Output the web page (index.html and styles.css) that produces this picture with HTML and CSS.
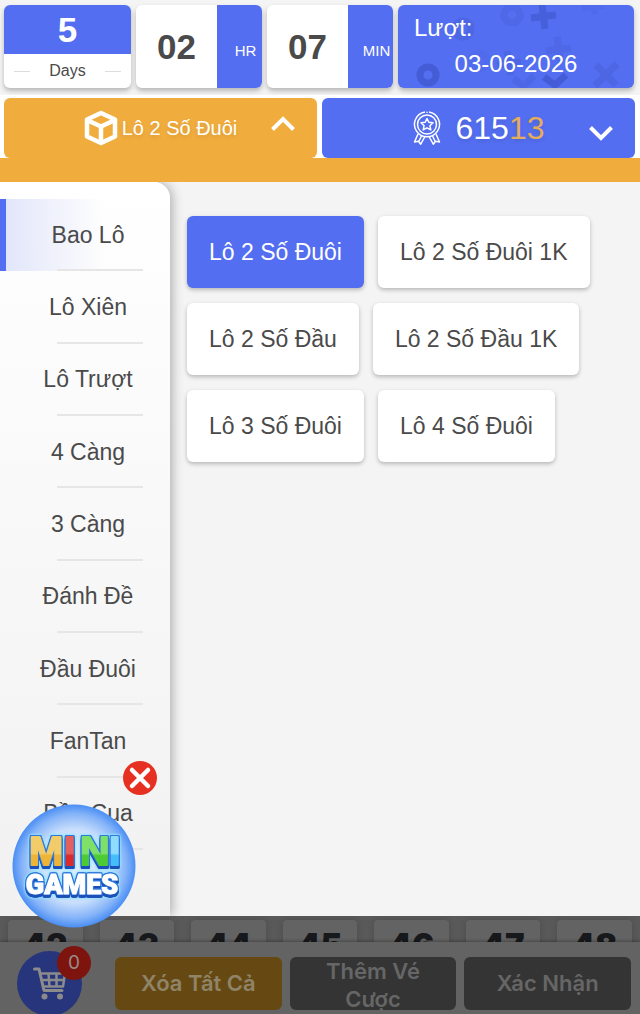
FILE: index.html
```html
<!DOCTYPE html>
<html lang="vi">
<head>
    <meta charset="UTF-8">
    <meta name="viewport" content="width=device-width, initial-scale=1.0">
    <title>Lô 2 Số Đuôi</title>
    <link rel="stylesheet" href="styles.css">
</head>
<body>
    <header class="summary">
        <div class="card days">
            <strong class="days-value">5</strong>
            <span class="days-label">Days</span>
        </div>
        <div class="card timer">
            <strong class="timer-value">02</strong>
            <span class="timer-unit">HR</span>
        </div>
        <div class="card timer">
            <strong class="timer-value">07</strong>
            <span class="timer-unit">MIN</span>
        </div>
        <div class="card draw">
            <svg class="draw-pattern" viewBox="0 0 236 83" preserveAspectRatio="xMaxYMid slice" fill="none" stroke="#3f58cf" stroke-width="7" aria-hidden="true">
                <circle cx="30" cy="70" r="8" opacity=".75"/>
                <circle cx="65" cy="24" r="8" opacity=".35"/>
                <circle cx="114" cy="10" r="8" opacity=".25"/>
                <circle cx="81" cy="56" r="8" opacity=".12"/>
                <path d="M144-1l3 25M133 13l25-3" opacity=".65"/>
                <path d="M159 32l3 24M148 46l25-3" opacity=".25"/>
                <path d="M194-8l3 17M184 3l22-3" opacity=".15"/>
                <path d="M109 46l4 24M99 60l24-3" opacity=".35"/>
                <path d="M198 60l20 20M219 59l-22 22" opacity=".35"/>
                <path d="M146 72l11 8 11-10" opacity=".75"/>
                <path d="M115 74l11 7 10-10" opacity=".3"/>
            </svg>
            <span class="draw-label">Lượt:</span>
            <time class="draw-date" datetime="2026-06-03">03-06-2026</time>
        </div>
    </header>

    <div class="tabs">
        <button type="button" class="tab tab-game">
            <span class="tab-content">
                <svg width="34" height="36" viewBox="0 0 34 36" fill="none" stroke="#fff" stroke-width="4.500" stroke-linejoin="round" stroke-linecap="round" aria-hidden="true">
                    <path d="M17 3L31 9.500V26.500L17 33L3 26.500V9.500Z"/>
                    <path d="M4 10.500L17 16.500L30 10.500M17 16.500V32"/>
                </svg>
                Lô 2 Số Đuôi
            </span>
            <svg class="chevron chevron-up" width="24" height="16" viewBox="0 0 24 16" fill="none" stroke="#fff" stroke-width="4" aria-hidden="true">
                <path d="M1.500 13.500L12 3L22.500 13.500"/>
            </svg>
        </button>
        <button type="button" class="tab tab-result">
            <span class="tab-content result">
                <svg width="28" height="34" viewBox="0 0 28 34" fill="none" stroke="#fff" stroke-width="1.500" stroke-linejoin="round" aria-hidden="true">
                    <path d="M12 1A12.500 12.500 0 1 0 16 1"/>
                    <circle cx="14" cy="1.200" r=".8" fill="#fff" stroke="none"/>
                    <circle cx="14" cy="13.500" r="9.500"/>
                    <path d="M14 7.500l1.800 3.800 4.200.5-3.100 2.900.9 4.200-3.800-2.100-3.800 2.100.9-4.200L8 11.800l4.200-.5z"/>
                    <path d="M5 23L1.500 31l4-.8 2.200 3L12 25.500M8.500 25L6 30M23 23l3.500 8-4-.8-2.200 3L16 25.500M19.500 25l2.500 5"/>
                </svg>
                <span class="result-number">615<span class="result-tail">13</span></span>
            </span>
            <svg class="chevron chevron-down" width="24" height="16" viewBox="0 0 24 16" fill="none" stroke="#fff" stroke-width="4" aria-hidden="true">
                <path d="M1.500 2.500L12 13L22.500 2.500"/>
            </svg>
        </button>
    </div>

    <main class="board">
        <nav class="sidebar">
            <a href="#" class="side-link active">Bao Lô</a>
            <a href="#" class="side-link">Lô Xiên</a>
            <a href="#" class="side-link">Lô Trượt</a>
            <a href="#" class="side-link">4 Càng</a>
            <a href="#" class="side-link">3 Càng</a>
            <a href="#" class="side-link">Đánh Đề</a>
            <a href="#" class="side-link">Đầu Đuôi</a>
            <a href="#" class="side-link">FanTan</a>
            <a href="#" class="side-link">Bầu Cua</a>
        </nav>
        <section class="options">
            <button type="button" class="option selected">Lô 2 Số Đuôi</button>
            <button type="button" class="option">Lô 2 Số Đuôi 1K</button>
            <button type="button" class="option">Lô 2 Số Đầu</button>
            <button type="button" class="option">Lô 2 Số Đầu 1K</button>
            <button type="button" class="option">Lô 3 Số Đuôi</button>
            <button type="button" class="option">Lô 4 Số Đuôi</button>
        </section>
    </main>

    <footer class="bet">
        <div class="numbers">
            <span class="number">42</span>
            <span class="number">43</span>
            <span class="number">44</span>
            <span class="number">45</span>
            <span class="number">46</span>
            <span class="number">47</span>
            <span class="number">48</span>
        </div>
        <div class="bet-bar">
            <button type="button" class="cart" aria-label="Cart">
                <svg width="34" height="33" viewBox="0 0 34 33" fill="none" stroke="#8b8b8b" stroke-width="3" stroke-linejoin="round" stroke-linecap="round" aria-hidden="true">
                    <path d="M1.500 2H6l5 21.500h18"/>
                    <path d="M7 6.500h25l-2 13H10M8.500 13h22M15.500 7l1 12M23.500 7v12" stroke-width="2.500"/>
                    <circle cx="11.500" cy="29.500" r="3" fill="#8b8b8b" stroke="none"/>
                    <circle cx="27" cy="29.500" r="3" fill="#8b8b8b" stroke="none"/>
                </svg>
                <span class="cart-count">0</span>
            </button>
            <button type="button" class="bet-button clear">Xóa Tất Cả</button>
            <button type="button" class="bet-button">Thêm Vé Cược</button>
            <button type="button" class="bet-button">Xác Nhận</button>
        </div>
    </footer>

    <div class="mini-games">
        <button type="button" class="mini-close" aria-label="Close">
            <svg width="34" height="34" viewBox="0 0 34 34" aria-hidden="true">
                <circle cx="17" cy="17" r="17" fill="#e63122"/>
                <path d="M9 9l16 16M25 9L9 25" stroke="#fff" stroke-width="4.500" stroke-linecap="round"/>
            </svg>
        </button>
        <a href="#" class="mini-ball">
            <svg width="124" height="124" viewBox="0 0 124 124">
                <defs>
                    <radialGradient id="ball">
                        <stop offset="0" stop-color="#e9f1fe"/>
                        <stop offset=".6" stop-color="#c9defc"/>
                        <stop offset=".85" stop-color="#84b3f8"/>
                        <stop offset="1" stop-color="#4a8ef4"/>
                    </radialGradient>
                    <linearGradient id="gold" x2="0" y2="1">
                        <stop offset=".55" stop-color="#f3cc6a"/>
                        <stop offset=".6" stop-color="#eeb437"/>
                    </linearGradient>
                    <linearGradient id="red" x2="0" y2="1">
                        <stop offset=".55" stop-color="#e4605c"/>
                        <stop offset=".6" stop-color="#d92b2b"/>
                    </linearGradient>
                    <linearGradient id="green" x2="0" y2="1">
                        <stop offset=".55" stop-color="#7fe069"/>
                        <stop offset=".6" stop-color="#4ccb34"/>
                    </linearGradient>
                    <linearGradient id="sky" x2="0" y2="1">
                        <stop offset=".55" stop-color="#8fdcff"/>
                        <stop offset=".6" stop-color="#45bdf8"/>
                    </linearGradient>
                </defs>
                <circle cx="62" cy="62" r="61.500" fill="url(#ball)"/>
                <g class="logo-mini">
                    <text x="17" y="61" fill="url(#gold)" stroke="url(#gold)">M</text>
                    <text x="52" y="61" fill="url(#red)" stroke="url(#red)">I</text>
                    <text x="68" y="61" fill="url(#green)" stroke="url(#green)">N</text>
                    <text x="97" y="61" fill="url(#sky)" stroke="url(#sky)">I</text>
                </g>
                <text class="logo-games" x="60" y="90" text-anchor="middle">GAMES</text>
            </svg>
        </a>
    </div>
</body>
</html>
```
FILE: styles.css
```css
* {
    box-sizing: border-box;
}
body {
    font-family: "Liberation Sans", Arial, sans-serif;
    margin: 0;
    height: 100vh;
    display: flex;
    flex-direction: column;
    background-color: #f4f4f4;
    color: #4a4a4a;
    overflow: hidden;
}
button {
    font-family: inherit;
    border: none;
    padding: 0;
    color: inherit;
    cursor: pointer;
}
a {
    color: inherit;
    text-decoration: none;
}
svg {
    display: block;
    flex-shrink: 0;
}

/* countdown */
.summary {
    display: grid;
    grid-template-columns: 127fr 126fr 126fr 236fr;
    gap: 5px;
    padding: 5px 6px 7px 4px;
}
.card {
    height: 83px;
    border-radius: 6px;
    background-color: #fff;
    box-shadow: 0 3px 5px rgba(0,0,0,0.25);
    overflow: hidden;
}
.days {
    display: flex;
    flex-direction: column;
    text-align: center;
}
.days-value {
    height: 49px;
    line-height: 49px;
    font-size: 35px;
    color: #fff;
    background-color: #536ef0;
}
.days-label {
    flex: 1;
    display: flex;
    align-items: center;
    justify-content: space-between;
    padding: 0 10px;
    font-size: 16px;
}
.days-label::before,
.days-label::after {
    content: "";
    width: 16px;
    height: 1px;
    background-color: #ddd;
}
.timer {
    display: flex;
}
.timer-value {
    flex: 1;
    line-height: 83px;
    font-size: 35px;
    text-align: center;
}
.timer-unit {
    width: 45px;
    padding: 9px 0 0 12px;
    line-height: 74px;
    font-size: 15px;
    text-align: center;
    color: #fff;
    background-color: #536ef0;
}
.draw {
    position: relative;
    display: flex;
    flex-direction: column;
    padding: 5px 16px;
    font-size: 24px;
    line-height: 36px;
    color: #fff;
    background-color: #536ef0;
}
.draw-pattern {
    position: absolute;
    top: 0;
    left: 0;
    width: 100%;
    height: 100%;
}
.draw-label,
.draw-date {
    position: relative;
}
.draw-date {
    text-align: center;
}

/* tabs */
.tabs {
    display: grid;
    grid-template-columns: 1fr 1fr;
    gap: 5px;
    padding: 3px 5px 0 4px;
    background-color: #fff;
    border-bottom: 24px solid #f0ac3d;
}
.tab {
    display: grid;
    grid-template-columns: 1fr auto 1fr;
    align-items: center;
    height: 60px;
    padding: 0 22px;
    border-radius: 6px;
    color: #fff;
}
.tab-game {
    font-size: 20px;
    background-color: #f0ac3d;
}
.tab-result {
    font-size: 32px;
    background-color: #536ef0;
}
.tab-content {
    grid-column: 2;
    display: flex;
    align-items: center;
    gap: 4px;
    text-shadow: 0 2px 4px rgba(0,0,0,0.1);
}
.result {
    gap: 15px;
}
.result-tail {
    color: #e5ac5c;
}
.chevron {
    justify-self: end;
}
.chevron-up {
    margin-bottom: 8px;
}
.chevron-down {
    margin-top: 10px;
}

/* game list */
.board {
    flex: 1;
    min-height: 0;
    display: flex;
    overflow: hidden;
}
.sidebar {
    width: 170px;
    flex-shrink: 0;
    display: flex;
    flex-direction: column;
    padding: 17px 0 66px;
    border-radius: 0 16px 0 0;
    background: linear-gradient(#fff, #f1f1f1);
    box-shadow: 2px 0 12px rgba(0,0,0,0.3);
}
.side-link {
    position: relative;
    flex: 1;
    display: flex;
    align-items: center;
    justify-content: center;
    border-left: 6px solid transparent;
    font-size: 23px;
}
.side-link::after {
    content: "";
    position: absolute;
    right: 27px;
    bottom: 0;
    width: 86px;
    height: 2px;
    background-color: #e6e6e6;
}
.side-link.active {
    border-left-color: #536ef0;
    background: linear-gradient(to right, #e2e6fa, rgba(255,255,255,0) 60%);
}
.options {
    flex: 1;
    display: flex;
    flex-wrap: wrap;
    align-content: flex-start;
    gap: 15px 14px;
    padding: 34px 17px;
}
.option {
    height: 72px;
    padding: 0 22px;
    border-radius: 6px;
    font-size: 23px;
    background-color: #fff;
    box-shadow: 0 2px 4px rgba(0,0,0,0.25);
}
.option.selected {
    color: #fff;
    background-color: #536ef0;
}

/* bottom bar, dimmed while the menu is open */
.bet {
    font-family: Inter, "Liberation Sans", sans-serif;
    background-color: #636363;
}
.numbers {
    display: grid;
    grid-template-columns: repeat(7, 1fr);
    gap: 17px;
    height: 26px;
    padding: 4px 8px 0;
    overflow: hidden;
    background-color: #595959;
}
.number {
    height: 60px;
    border-radius: 4px;
    background-color: #636363;
    box-shadow: 0 0 6px rgba(0,0,0,0.15);
    color: #17191c;
    font-size: 33px;
    font-weight: 900;
    line-height: 50px;
    text-align: center;
}
.bet-bar {
    position: relative;
    display: flex;
    align-items: center;
    gap: 8px;
    height: 72px;
    padding: 11px 9px 0 17px;
    box-shadow: 0 -1px 3px rgba(0,0,0,0.3);
}
.cart {
    position: relative;
    width: 65px;
    height: 65px;
    flex-shrink: 0;
    margin-right: 25px;
    display: flex;
    align-items: center;
    justify-content: center;
    border-radius: 50%;
    background-color: #27357c;
}
.cart-count {
    position: absolute;
    top: -5px;
    right: -9px;
    width: 34px;
    border-radius: 50%;
    font-size: 19px;
    line-height: 34px;
    color: #9a8a88;
    background-color: #7d150e;
}
.bet-button {
    flex: 1 1 0;
    height: 53px;
    padding: 0 22px 2px;
    border-radius: 6px;
    font-size: 22px;
    font-weight: 600;
    line-height: 28px;
    color: #666;
    background-color: #343434;
}
.bet-button.clear {
    color: #8f8468;
    background-color: #664912;
}

/* floating game launcher */
.mini-games {
    position: fixed;
    left: 12px;
    bottom: 86px;
    width: 145px;
}
.mini-close {
    display: block;
    margin-left: auto;
    margin-bottom: 9px;
    border-radius: 50%;
    background: none;
}
.mini-ball {
    display: block;
    width: 124px;
}
.logo-mini,
.logo-games {
    stroke-linejoin: round;
    filter:
        drop-shadow(1px 0 0 #2f78dc)
        drop-shadow(-1px 0 0 #2f78dc)
        drop-shadow(0 -1px 0 #2f78dc)
        drop-shadow(0 3px 0 #1c4fb8)
        drop-shadow(0 0 1px #8fe3ff)
        drop-shadow(0 0 1px #8fe3ff);
}
.logo-mini {
    font-family: "Liberation Sans Narrow", "Liberation Sans", sans-serif;
    font-size: 41px;
    font-weight: 700;
    stroke-width: 2px;
}
.logo-games {
    font-family: Roboto, "Liberation Sans", sans-serif;
    font-size: 27px;
    font-weight: 900;
    fill: #fff;
    stroke: #fff;
    stroke-width: 1px;
}
```
